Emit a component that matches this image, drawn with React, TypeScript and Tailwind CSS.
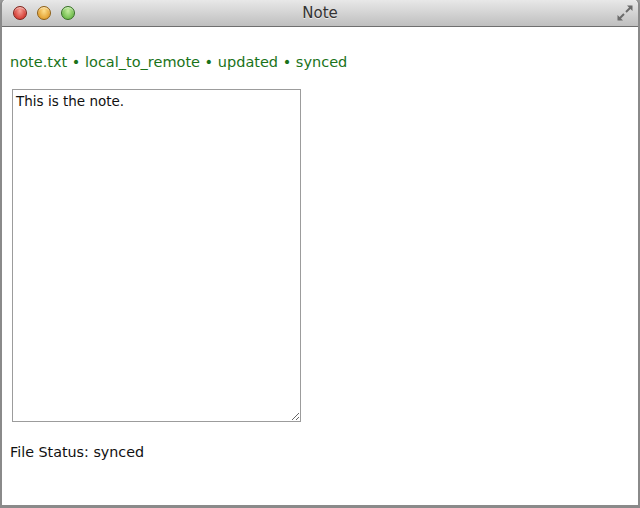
import { useState } from "react";

const Light = ({ from, to, ring }: { from: string; to: string; ring: string }) => (
  <span
    className={`block w-[14px] h-[14px] rounded-full border ${ring} bg-radial-[at_50%_30%] ${from} ${to} shadow-[inset_0_1px_1px_rgba(255,255,255,0.6)]`}
  />
);

const TitleBar = () => (
  <div className="h-[27px] shrink-0 flex items-center relative bg-gradient-to-b from-[#e8e8e8] to-[#bfbfbf] border-b border-[#6f6f6f] rounded-t-[5px]">
    <div className="flex items-center gap-[10px] pl-[11px]">
      <Light from="from-[#f7a49a]" to="to-[#c8160e]" ring="border-[#7e2018]" />
      <Light from="from-[#ffe08e]" to="to-[#d8880c]" ring="border-[#8d5e14]" />
      <Light from="from-[#c6eea0]" to="to-[#4ea82c]" ring="border-[#346e22]" />
    </div>
    <div className="absolute inset-x-0 top-0 h-full flex items-center justify-center pointer-events-none">
      <span className="text-[15px] text-[#333] font-['DejaVu_Sans',sans-serif] [text-shadow:0_1px_0_rgba(255,255,255,0.6)]">
        Note
      </span>
    </div>
    <svg className="absolute right-[4px] top-[4px]" width="18" height="18" viewBox="0 0 18 18">
      <g stroke="#6a6a6a" strokeWidth="2" fill="none">
        <path d="M10 8 L15.5 2.5" />
        <path d="M8 10 L2.5 15.5" />
      </g>
      <path d="M11 1.5 H16.5 V7 Z" fill="#6a6a6a" />
      <path d="M1.5 11 V16.5 H7 Z" fill="#6a6a6a" />
    </svg>
  </div>
);

export default function App() {
  const [note, setNote] = useState("This is the note.");
  return (
    <div className="w-[640px] h-[508px] bg-[#9a9a9a] font-['DejaVu_Sans',sans-serif]">
      <div className="w-full h-full flex flex-col rounded-t-[5px] border-x-2 border-b-[3px] border-[#8a8a8a] bg-white overflow-hidden">
        <TitleBar />
        <div className="flex flex-col pl-[8px] pt-[25px]">
          <p className="text-[#1a731a] text-[14.5px] leading-[20px]">
            note.txt • local_to_remote • updated • synced
          </p>
          <textarea
            value={note}
            onChange={(e) => setNote(e.target.value)}
            className="mt-[17px] ml-[2px] w-[289px] h-[333px] border border-[#9c9c9c] px-[3px] py-[3px] text-[13.5px] leading-[16px] text-[#111] outline-none resize font-['DejaVu_Sans',sans-serif]"
          />
          <p className="mt-[20px] text-[14.3px] leading-[20px] text-[#111]">File Status: synced</p>
        </div>
      </div>
    </div>
  );
}
